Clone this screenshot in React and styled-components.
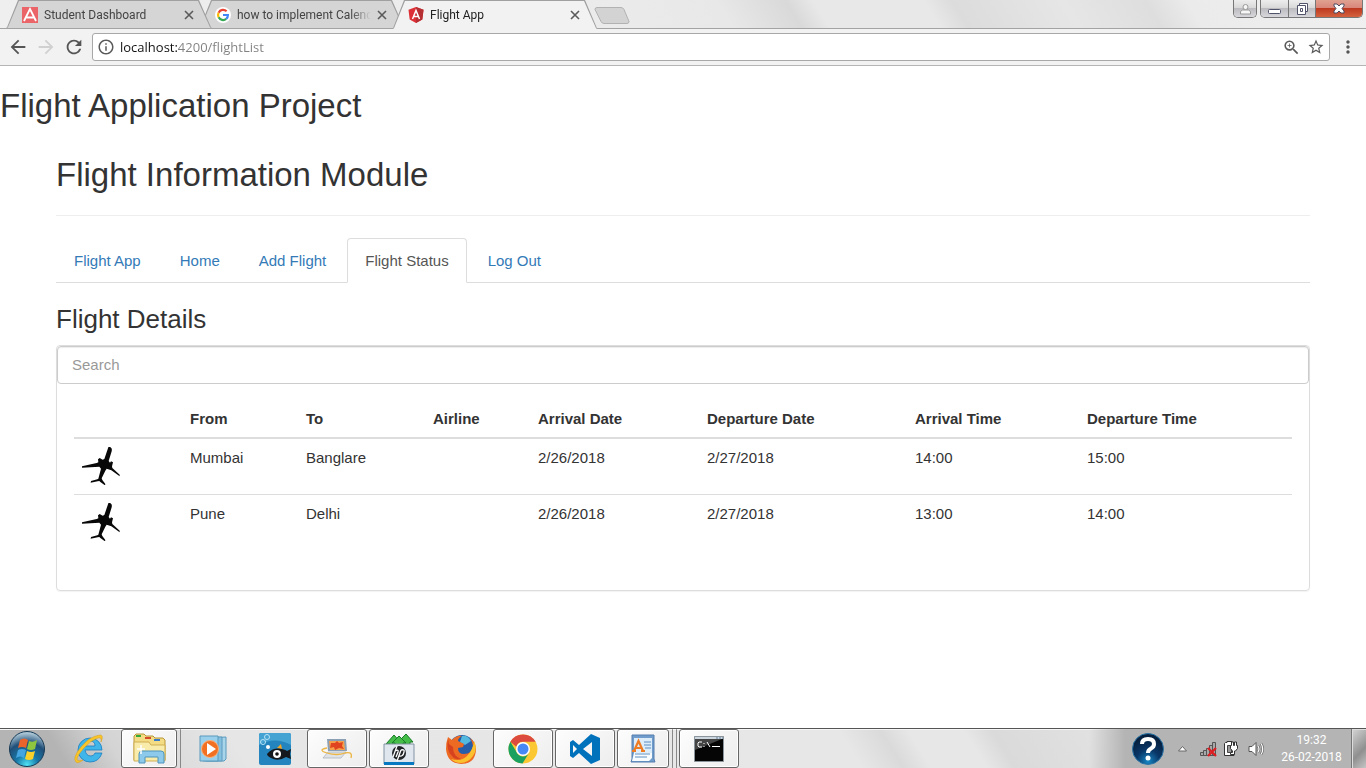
import React from "react";
import styled, { createGlobalStyle, css } from "styled-components";
import {
  MdArrowBack,
  MdArrowForward,
  MdRefresh,
  MdInfoOutline,
  MdZoomIn,
  MdStarBorder,
  MdMoreVert,
} from "react-icons/md";

const GlobalStyle = createGlobalStyle`
  * { box-sizing: border-box; }
  body {
    margin: 0;
    background: #fff;
    color: #333;
    font-family: "Liberation Sans", Arial, sans-serif;
    font-size: 15px;
    line-height: 22px;
  }
  button { padding: 0; border: 0; background: none; font: inherit; color: inherit; }
  svg { display: block; flex: none; }
`;

const uiFont = css`
  font-family: Roboto, "Segoe UI", sans-serif;
`;

const Screen = styled.div`
  display: flex;
  flex-direction: column;
  min-height: 100vh;
`;

/* Browser window */

const TabStrip = styled.header`
  ${uiFont}
  display: flex;
  align-items: flex-start;
  height: 29px;
  padding: 0 3px 0 6px;
  border-bottom: 1px solid #a3a3a3;
  background: linear-gradient(
    58deg,
    #efefef 0%, #ebebeb 44%, #e8e8e8 53%, #d9d9d9 58%, #e8e8e8 60%, #e8e8e8 68%,
    #dcdcdc 70%, #e6e6e6 78%, #dedede 84%, #ebebeb 87%, #f0f0f0 100%
  );
`;

const Tabs = styled.nav`
  display: flex;
  flex: 1;
  min-width: 0;
`;

const tabShape = "polygon(0 100%, 1px 97%, 12px 0, calc(100% - 13px) 0, calc(100% - 1px) 97%, 100% 100%)";

const Tab = styled.div`
  position: relative;
  z-index: ${(p) => p.$level};
  display: flex;
  align-items: center;
  gap: 6px;
  width: 206px;
  height: ${(p) => (p.$active ? 29 : 28)}px;
  padding: 1px 18px 0 16px;
  margin-right: -13px;
  color: #333;
  font-size: 12px;
  isolation: isolate;

  &::before, &::after {
    content: "";
    position: absolute;
    z-index: -1;
    inset: 0;
    background: #a0a0a0;
    clip-path: ${tabShape};
  }
  &::after {
    inset: 1px 1px 0;
    background: ${(p) => (p.$active ? "#f2f2f2" : "#d5d5d5")};
  }
`;

const TabTitle = styled.span`
  flex: 1;
  overflow: hidden;
  white-space: nowrap;
  color: ${(p) => (p.$active ? "#222" : "#444")};
  mask-image: linear-gradient(90deg, #000 calc(100% - 20px), transparent);
`;

const TabClose = styled.button`
  display: grid;
  place-items: center;
  width: 10px;
  height: 16px;
`;

const NewTab = styled.button`
  width: 34px;
  height: 17px;
  margin: 7px 0 0 10px;
  svg { overflow: visible; }
`;

const WindowControls = styled.div`
  display: flex;
  gap: 3px;
`;

const ControlGroup = styled.div`
  display: flex;
  height: 18px;
  border: 1px solid #777;
  border-top: 0;
  border-radius: 0 0 5px 5px;
  overflow: hidden;
`;

const ControlButton = styled.button`
  display: grid;
  place-items: center;
  width: ${(p) => p.$width}px;
  border-right: 1px solid #777;
  background: ${(p) =>
    p.$close
      ? "linear-gradient(#e0a191 0, #d8877a 45%, #bd3a20 50%, #d4623f 100%)"
      : "linear-gradient(#ededed 0, #d9d9d9 45%, #bcbcc0 50%, #d8d8dc 100%)"};
  &:last-child { border-right: 0; }
`;

const Toolbar = styled.form`
  display: flex;
  align-items: center;
  height: 37px;
  padding: 0 8px 0 4px;
  border-bottom: 1px solid #b5b5b5;
  background: #f2f2f2;
`;

const ToolButton = styled.button`
  display: grid;
  place-items: center;
  width: 28px;
  height: 28px;
  color: ${(p) => (p.disabled ? "#d0d0d0" : "#555")};
`;

const Omnibox = styled.div`
  display: flex;
  align-items: center;
  flex: 1;
  height: 28px;
  margin: 0 8px 0 4px;
  padding: 0 3px 0 4px;
  gap: 5px;
  border: 1px solid #a8a8a8;
  border-radius: 3px;
  background: #fff;
  color: #5a5a5a;
`;

const Address = styled.input`
  font-family: "Open Sans", "Segoe UI", sans-serif;
  flex: 1;
  min-width: 0;
  height: 24px;
  padding: 0;
  border: 0;
  outline: 0;
  font-size: 13px;
  color: transparent;
  background: linear-gradient(90deg, #111 57px, #808080 57px);
  background-clip: text;
  caret-color: #111;
`;

const OmniButton = styled.button`
  display: grid;
  place-items: center;
  width: 20px;
  height: 20px;
`;

const MenuButton = styled.button`
  display: grid;
  place-items: center;
  width: 20px;
  height: 28px;
  color: #555;
`;

/* Flight application */

const Page = styled.main`
  flex: 1;
  padding: 22px 0;
`;

const Heading = styled.h1`
  margin: 0;
  font-size: 33px;
  font-weight: 400;
  line-height: 36px;
`;

const Container = styled.section`
  margin: 33px 56px 0;
`;

const Divider = styled.hr`
  margin: 22px 0;
  border: 0;
  border-top: 1px solid #eee;
`;

const NavTabs = styled.nav`
  display: flex;
  gap: 3px;
  border-bottom: 1px solid #ddd;
`;

const NavLink = styled.a`
  padding: 11px 17px 10px;
  margin-bottom: -1px;
  border: 1px solid transparent;
  border-radius: 4px 4px 0 0;
  color: #337ab7;
  text-decoration: none;
  ${(p) =>
    p.$active &&
    css`
      border-color: #ddd #ddd #fff;
      background: #fff;
      color: #555;
    `}
`;

const SubHeading = styled.h2`
  margin: 22px 0 11px;
  font-size: 26px;
  font-weight: 400;
  line-height: 29px;
`;

const Panel = styled.div`
  border: 1px solid #ddd;
  border-radius: 4px;
  box-shadow: 0 1px 1px rgba(0, 0, 0, 0.05);
`;

const Search = styled.input`
  display: block;
  width: 100%;
  height: 38px;
  padding: 0 14px 2px;
  border: 1px solid #ccc;
  border-radius: 4px;
  outline: 0;
  box-shadow: inset 0 1px 1px rgba(0, 0, 0, 0.075);
  font: inherit;
  &::placeholder { color: #999; }
`;

const PanelBody = styled.div`
  padding: 16px 17px 18px;
`;

const Table = styled.table`
  width: 100%;
  margin-bottom: 22px;
  border-collapse: collapse;
  table-layout: fixed;
`;

const Col = styled.col`
  width: ${(p) => p.$width}px;
`;

const Th = styled.th`
  padding: 8px 8px 7px;
  border-bottom: 2px solid #ddd;
  text-align: left;
`;

const Td = styled.td`
  height: 56px;
  padding: 8px;
  border-top: 1px solid #ddd;
  vertical-align: top;
`;

/* Desktop taskbar */

const Taskbar = styled.footer`
  ${uiFont}
  display: flex;
  height: 40px;
  border-top: 1px solid #555;
  box-shadow: inset 0 1px #f6f6f6;
  background: linear-gradient(
    58deg,
    #b4b4b4 0, #b4b4b4 5%, #d4d4d4 9%, #e6e6e6 18%, #e7e7e7 62%, #dadada 65%,
    #e7e7e7 67%, #e7e7e7 71%, #dadada 73%, #e3e3e3 82%, #e3e3e3 100%
  );
`;

const StartButton = styled.button`
  display: grid;
  place-items: center;
  width: 54px;
`;

const Apps = styled.div`
  display: flex;
  flex: 1;
  gap: 2px;
  padding-left: 5px;
`;

const Slot = styled.div`
  display: flex;
  gap: 3px;
  width: 60px;
`;

const AppButton = styled.button`
  display: grid;
  place-items: center;
  flex: 1;
  border: 1px solid transparent;
  border-radius: 3px;
  ${(p) =>
    p.$open &&
    css`
      border-color: #666;
      background: linear-gradient(135deg, #fdfdfd, #ededed);
      box-shadow: inset 0 0 0 1px #fff;
    `}
`;

const StackEdge = styled.span`
  width: 1px;
  border-radius: 2px;
  background: #888;
`;

const Tray = styled.div`
  display: flex;
  align-items: center;
  padding-left: 40px;
  color: #fff;
  background: linear-gradient(90deg, #e3e3e300 0, #b4b4b4 36px);
`;

const TrayButton = styled.button`
  display: grid;
  place-items: center;
  width: ${(p) => p.$width}px;
  height: 38px;
`;

const Clock = styled.time`
  width: 83px;
  padding-left: 4px;
  font-size: 12px;
  line-height: 17px;
  text-align: center;
  white-space: nowrap;
`;

const ShowDesktop = styled.button`
  align-self: stretch;
  width: 15px;
  border-left: 1px solid #777;
  background: linear-gradient(135deg, #d5d5d5, #8f8f8f 60%, #c5c5c5);
  box-shadow: inset 1px 1px #ddd;
`;

/* Drawings */

const CloseMark = () => (
  <svg width="10" height="10" viewBox="0 0 10 10" stroke="#5a5a5a" strokeWidth="1.600">
    <path d="M1 1l8 8M9 1L1 9" />
  </svg>
);

const AngularOld = () => (
  <svg width="16" height="16" viewBox="0 0 16 16">
    <path fill="#ea6468" d="M0 0h16v16H0z" />
    <path d="M2 14L8 2l6 12M4.500 10.500h7" fill="none" stroke="#fff" strokeWidth="1.800" />
  </svg>
);

const GoogleMark = () => (
  <svg width="16" height="16" viewBox="0 0 16 16">
    <circle cx="8" cy="8" r="8" fill="#fff" />
    <g fill="none" strokeWidth="2.200">
      <path d="M11.600 4.300A5 5 0 0 0 3.600 5.700" stroke="#ea4335" />
      <path d="M3.600 5.700a5 5 0 0 0 0 4.600" stroke="#fbbc05" />
      <path d="M3.600 10.300a5 5 0 0 0 7.600 1.600" stroke="#34a853" />
      <path d="M8 8h4.900a5 5 0 0 1-1.700 3.900" stroke="#4285f4" />
    </g>
  </svg>
);

const AngularShield = () => (
  <svg width="16" height="16" viewBox="0 0 16 16">
    <path fill="#dd3036" d="M8 0l7.500 2.700-1.200 9.800L8 16l-6.300-3.500L.500 2.700z" />
    <path fill="#b52e31" d="M8 0l7.500 2.700-1.200 9.800L8 16z" />
    <path fill="none" stroke="#fff" strokeWidth="1.500" d="M4.500 12L8 3.500l3.500 8.500M6 9.500h4" />
  </svg>
);

const Plane = () => (
  <svg width="38" height="38" viewBox="0 0 114 114" role="img" aria-label="Flight">
    <path
      fill="#080808"
      d="M86 2q5 1 3 11L80 42l4 5 3-4 6 3-3 12 1 5 22 20v5L88 70 74 65l-4 6-11 23 2 5 9 12-1 4-14-10-3-3-5 1-21 4 1-5 19-5 3-2 8-30-5-6-52 3v-4l44-10 5-2-1-9 5-4 9 5 5-2 12-35q3-9 6-9z"
    />
  </svg>
);

const StartOrb = () => (
  <svg width="38" height="38" viewBox="0 0 38 38">
    <defs>
      <radialGradient id="orb" cx="50%" cy="95%" r="90%">
        <stop offset="0" stopColor="#4fe3f5" />
        <stop offset=".35" stopColor="#1878a8" />
        <stop offset=".7" stopColor="#204f78" />
        <stop offset="1" stopColor="#a9c4d4" />
      </radialGradient>
    </defs>
    <circle cx="19" cy="19" r="17.500" fill="url(#orb)" stroke="#173a55" />
    <path fill="#e9632b" d="M12 10q4-3 8 0l-2 8q-4-2-8 0z" />
    <path fill="#8fc63f" d="M21 11q4 2 8-1l-2 9q-4 2-8 0z" />
    <path fill="#45a5e0" d="M10 20q4-2 8 0l-2 8q-4-3-8 0z" />
    <path fill="#fcd12a" d="M19 21q4 2 8 0l-2 8q-4 2-8 0z" />
  </svg>
);

const ExplorerE = () => (
  <svg width="32" height="32" viewBox="0 0 32 32">
    <path
      d="M29 20q-3 9-12 9A12 12 0 1 1 29 17H12q1 6 6 6 3 0 4-3zM12 13h10q0-5-5-5t-5 5z"
      fill="#3fb5ea" stroke="#1b7fc0" strokeWidth=".8" fillRule="evenodd"
    />
    <path d="M3 29Q-1 25 8 14T27 2q4 0 1 7 1-5-3-4-7 2-14 10T4 26q0 3 6 1-5 4-7 2z" fill="#f8c52a" stroke="#d99a13" strokeWidth=".5" />
  </svg>
);

const Folders = () => (
  <svg width="34" height="32" viewBox="0 0 34 32">
    <path fill="#f3dc84" stroke="#b89638" d="M2 27V3l2-2h8l2 2h7l2 2h8l2 2v20z" />
    <path fill="#35a83a" d="M4 2h5v2H4z" />
    <path fill="#d64a2c" d="M13 4h6v2h-6z" />
    <path fill="#3b7cc9" d="M22 6h6v2h-6z" />
    <path fill="#f9ebaa" stroke="#d0af52" d="M2 9h15l2 3h14v16H2z" />
    <path fill="#8cc9ea" stroke="#4e94bd" d="M7 30V21q0-3 3-3h19q3 0 3 3v9h-6v-6H13v6z" />
    <path stroke="#fff" strokeWidth="1.500" d="M9 12v9M5 16h8" />
  </svg>
);

const MediaPlayer = () => (
  <svg width="28" height="28" viewBox="0 0 28 28">
    <path fill="#a9d5ea" stroke="#5b9abd" d="M7 3l20-1v22l-2 2H7z" />
    <path fill="#86c0df" stroke="#5b9abd" d="M4 2h19v24H4z" />
    <path fill="#9bd0ec" stroke="#5b9abd" d="M1 1h18v25H1z" />
    <circle cx="11" cy="14" r="8.500" fill="#f27022" stroke="#fbb27c" />
    <path fill="#fff" d="M8 8l9 6-9 6z" />
  </svg>
);

const FishApp = () => (
  <svg width="32" height="32" viewBox="0 0 32 32">
    <rect width="32" height="32" rx="2" fill="#2484bd" />
    <path fill="#44a3d2" d="M0 12q16-9 32 0V2q0-2-2-2H2Q0 0 0 2z" />
    <path fill="#f6a623" d="M18 15l4-4 1 5z" />
    <path fill="#15191d" d="M8 21q6-7 15-5 4 1 5 2l4-2-1 5 1 5-5-2q-8 5-15 1-4-2-4-4z" />
    <circle cx="18" cy="21" r="4" fill="#fff" />
    <circle cx="18" cy="21" r="1.800" fill="#111" />
    <g fill="none" stroke="#b9e5f8"><circle cx="8" cy="4" r="2.500" /><circle cx="4" cy="9" r="2.500" /></g>
    <circle cx="9" cy="14" r="2" fill="#fff" />
  </svg>
);

const Laptop = () => (
  <svg width="32" height="24" viewBox="0 0 32 24">
    <path fill="#8ba0b5" d="M6 2h19l1 12H7z" />
    <path fill="#f5a04b" d="M8 4h15l1 9H9z" />
    <path fill="#e0451f" d="M10 6l4 0 2-2 2 2 4-1-1 4 2 3-5-1-4 2-1-3-4 1z" />
    <path fill="#dfe3e7" stroke="#a5adb6" strokeWidth=".7" d="M7 15h18l-5 6H2z" />
    <path fill="none" stroke="#ecb644" strokeWidth="1.300" d="M6 11Q-4 13 6 16q10 3 18 0 8-2 6 5" />
  </svg>
);

const HpUpdate = () => (
  <svg width="32" height="34" viewBox="0 0 32 34">
    <g fill="#45bd49" stroke="#177a27">
      <path d="M3 12l8-9 7 8h-3v5H7v-4z" />
      <path d="M15 10l8-8 7 8h-3v5h-8v-5z" />
      <path d="M9 11l7-7 7 7h-3v5h-8v-5z" />
    </g>
    <path fill="#dfe6ed" stroke="#8293a3" d="M1 12h30v20H1z" />
    <path fill="#0878c0" d="M1 30h30v3H1z" />
    <circle cx="16" cy="21" r="7" fill="#202427" />
    <g fill="none" stroke="#fff" strokeWidth="1.300">
      <path d="M14 14l-4 11M12 19q4-2 3 1l-2 5M18 18l-4 11M18 18q4-1 3 2-1 5-5 4" />
    </g>
  </svg>
);

const Firefox = () => (
  <svg width="32" height="32" viewBox="0 0 32 32">
    <circle cx="17" cy="15" r="13" fill="#255da8" />
    <path fill="#54b9df" d="M17 3q6-1 9 5l-6 4-5-3z" />
    <path fill="#ed6a22" d="M3 4l4 3q5-5 10-4-4 2-4 5l6 3-1 3-5 1q0 6 6 6 8 0 9-8-1-5-3-8 6 4 6 12-1 14-15 14Q2 30 1 16 1 9 3 4z" />
    <path fill="#fbc02d" d="M29 8q4 8-1 15-5 7-12 7-6 0-10-4 10 3 16-3 6-6 7-15z" />
    <path fill="#d8431f" d="M3 6q-2 12 4 17 3 4 9 3-8-3-8-12L4 11z" />
  </svg>
);

const ChromeMark = () => (
  <svg width="30" height="30" viewBox="0 0 30 30">
    <circle cx="15" cy="15" r="14.500" fill="#fbc834" />
    <path fill="#dc4b3e" d="M2.400 7.700A14.500 14.500 0 0 1 27.600 7.700H15a7 7 0 0 0-6.700 5z" />
    <path fill="#1aa15f" d="M2.400 7.700A14.500 14.500 0 0 0 14.500 29.500L21 19a7 7 0 0 1-12.500-1z" />
    <circle cx="15" cy="15" r="7" fill="#fff" />
    <circle cx="15" cy="15" r="5.500" fill="#4688f4" />
  </svg>
);

const VsCode = () => (
  <svg width="30" height="30" viewBox="0 0 30 30">
    <path
      fill="#0072bc" fillRule="evenodd"
      d="M21 0l9 4v22l-9 4L9 19l-6 5-3-2V8l3-2 6 5zM22 8l-9 7 9 7zM3 11v8l4-4z"
    />
  </svg>
);

const WordPad = () => (
  <svg width="26" height="30" viewBox="0 0 26 30">
    <path fill="#6f9ccc" stroke="#547fae" d="M2 1h22v24l1 3H1l1-3z" />
    <path fill="#dcecf9" d="M4 4h18v16H4z" />
    <path fill="#f8fbfe" d="M4 19h18v5l-3 3H2z" />
    <path fill="none" stroke="#ed7c24" strokeWidth="2.200" d="M4 17L8.500 7 13 17M6 14h5M2 17h4M11 17h4" />
    <path stroke="#5d8fc0" d="M14 8h7M14 11h7M15 14h6M5 20h15M5 23h12" />
  </svg>
);

const Console = () => (
  <svg width="30" height="26" viewBox="0 0 30 26">
    <path fill="#050505" stroke="#8b949b" d="M.500 .500h29v25H.500z" />
    <path fill="#ccd7df" d="M1 1h28v2H1z" />
    <path fill="#444" d="M1 3h27L1 14z" />
    <path stroke="#5d7d98" strokeDasharray="2 1" d="M22 2h7" />
    <path fill="none" stroke="#fff" d="M8 6H5L4 7v3l1 1h3M10 7v1M10 10v1M13 6l3 5M18 10.500h8" />
  </svg>
);

const HelpOrb = () => (
  <svg width="32" height="32" viewBox="0 0 32 32">
    <defs>
      <radialGradient id="help" cx="50%" cy="90%" r="75%">
        <stop offset="0" stopColor="#1787c5" />
        <stop offset=".5" stopColor="#0a3768" />
        <stop offset="1" stopColor="#06203f" />
      </radialGradient>
    </defs>
    <circle cx="16" cy="16" r="15.500" fill="url(#help)" stroke="#2c76a8" />
    <path d="M10 11q0-5 6-5t6 5q0 3-3 4.500t-3 4.500" fill="none" stroke="#fff" strokeWidth="4" />
    <circle cx="16" cy="25" r="2.500" fill="#fff" />
  </svg>
);

const Network = () => (
  <svg width="17" height="16" viewBox="0 0 17 16">
    <path
      fill="#a8a8a8" stroke="#555"
      d="M.500 11.500h3v3h-3zM3.500 9.500h3v5h-3zM6.500 7.500h3v7h-3zM9.500 4.500h3v10h-3zM12.500 1.500h3v13h-3z"
    />
    <path stroke="#df1c20" strokeWidth="2.200" d="M8 7l8 8M16 7l-8 8" />
  </svg>
);

const Power = () => (
  <svg width="16" height="17" viewBox="0 0 16 17">
    <path fill="#fff" stroke="#333" d="M1.500 3.500l1-1H4v-1h5v1h2v13H1.500z" />
    <path fill="#999" stroke="#444" d="M4.500 5.500h4v7h-4z" />
    <path fill="#fff" stroke="#333" d="M7.500 5.500h1V2h2v3.500h1V2h2v3.500h1v3l-2 2.500h-1v3.500H7.500v-2h2V11L7.500 8.500z" />
  </svg>
);

const Speaker = () => (
  <svg width="17" height="16" viewBox="0 0 17 16">
    <path fill="#fff" stroke="#555" d="M1 5.500h3l4-4v13l-4-4H1z" />
    <path fill="none" stroke="#666" strokeWidth="2.500" d="M10 5q2 3 0 6M13 2.500q3.500 5.500 0 11" />
    <path fill="none" stroke="#fff" strokeWidth="1.200" d="M10 5q2 3 0 6M13 2.500q3.500 5.500 0 11" />
  </svg>
);

const browserTabs = [
  { title: "Student Dashboard", Icon: AngularOld },
  { title: "how to implement Calend", Icon: GoogleMark },
  { title: "Flight App", Icon: AngularShield, active: true },
];

const links = ["Flight App", "Home", "Add Flight", "Flight Status", "Log Out"];

const columns = [
  { label: "", width: 108 },
  { label: "From", width: 116 },
  { label: "To", width: 127 },
  { label: "Airline", width: 105 },
  { label: "Arrival Date", width: 169 },
  { label: "Departure Date", width: 208 },
  { label: "Arrival Time", width: 172 },
  { label: "Departure Time", width: 213 },
];

const flights = [
  ["Mumbai", "Banglare", "", "2/26/2018", "2/27/2018", "14:00", "15:00"],
  ["Pune", "Delhi", "", "2/26/2018", "2/27/2018", "13:00", "14:00"],
];

const apps = [
  { name: "Internet Explorer", Icon: ExplorerE },
  { name: "Windows Explorer", Icon: Folders, open: true, stack: 1 },
  { name: "Media Player", Icon: MediaPlayer },
  { name: "Fish", Icon: FishApp },
  { name: "Photo viewer", Icon: Laptop, open: true },
  { name: "HP Update", Icon: HpUpdate, open: true },
  { name: "Firefox", Icon: Firefox },
  { name: "Chrome", Icon: ChromeMark, open: true },
  { name: "Visual Studio Code", Icon: VsCode, open: true },
  { name: "WordPad", Icon: WordPad, open: true, stack: 2 },
  { name: "Command Prompt", Icon: Console, open: true },
];

const BrowserChrome = () => (
  <>
    <TabStrip>
      <Tabs aria-label="Browser tabs">
        {browserTabs.map(({ title, Icon, active }, i) => (
          <Tab key={title} $active={active} $level={active ? 5 : 3 - i}>
            <Icon />
            <TabTitle $active={active}>{title}</TabTitle>
            <TabClose type="button" aria-label={`Close ${title}`}><CloseMark /></TabClose>
          </Tab>
        ))}
        <NewTab type="button" aria-label="New tab">
          <svg width="34" height="17" viewBox="0 0 34 17">
            <path d="M2 .500h24q2 0 3 2l5 12q0 2-2 2H9q-2 0-3-2L0 2.500Q0 .500 2 .500z" fill="#d3d3d3" stroke="#b2b2b2" />
          </svg>
        </NewTab>
      </Tabs>
      <WindowControls>
        <ControlGroup>
          <ControlButton type="button" aria-label="Profile" $width={22}>
            <svg width="11" height="12" viewBox="0 0 11 12" fill="#f7f7f7" stroke="#999">
              <path d="M.500 11V8.500l2-1.500h6l2 1.500V11z" />
              <circle cx="5.500" cy="4" r="2.500" />
            </svg>
          </ControlButton>
        </ControlGroup>
        <ControlGroup>
          <ControlButton type="button" aria-label="Minimize" $width={28}>
            <svg width="13" height="11" viewBox="0 0 13 11">
              <rect x=".500" y="6.500" width="12" height="4" rx="1" fill="#fff" stroke="#50536a" />
            </svg>
          </ControlButton>
          <ControlButton type="button" aria-label="Restore" $width={27}>
            <svg width="13" height="13" viewBox="0 0 13 13" fill="#fff" stroke="#50536a">
              <path d="M3.500 1.500h8v8h-8z" />
              <path d="M1.500 3.500h8v9h-8zM4.500 6.500h2v3h-2z" />
            </svg>
          </ControlButton>
          <ControlButton type="button" aria-label="Close" $width={46} $close>
            <svg width="12" height="11" viewBox="0 0 12 11" fill="#fff" stroke="#4d4b60">
              <path d="M1 1h3l2 2 2-2h3v2L9 5.500 11 8v2H8L6 8l-2 2H1V8l2-2.500L1 3z" />
            </svg>
          </ControlButton>
        </ControlGroup>
      </WindowControls>
    </TabStrip>
    <Toolbar onSubmit={(e) => e.preventDefault()}>
      <ToolButton type="button" aria-label="Back"><MdArrowBack size={22} /></ToolButton>
      <ToolButton type="button" aria-label="Forward" disabled><MdArrowForward size={22} /></ToolButton>
      <ToolButton type="button" aria-label="Reload"><MdRefresh size={22} /></ToolButton>
      <Omnibox>
        <MdInfoOutline size={18} />
        <Address aria-label="Address" defaultValue="localhost:4200/flightList" spellCheck={false} />
        <OmniButton type="button" aria-label="Zoom"><MdZoomIn size={19} /></OmniButton>
        <OmniButton type="button" aria-label="Bookmark"><MdStarBorder size={18} /></OmniButton>
      </Omnibox>
      <MenuButton type="button" aria-label="Menu"><MdMoreVert size={20} /></MenuButton>
    </Toolbar>
  </>
);

const FlightTable = () => (
  <Table>
    <colgroup>
      {columns.map((c) => <Col key={c.label} $width={c.width} />)}
    </colgroup>
    <thead>
      <tr>{columns.map((c) => <Th key={c.label} scope="col">{c.label}</Th>)}</tr>
    </thead>
    <tbody>
      {flights.map((flight) => (
        <tr key={flight[0]}>
          <Td><Plane /></Td>
          {flight.map((value, i) => <Td key={i}>{value}</Td>)}
        </tr>
      ))}
    </tbody>
  </Table>
);

export default function App() {
  return (
    <Screen>
      <GlobalStyle />
      <BrowserChrome />
      <Page>
        <Heading>Flight Application Project</Heading>
        <Container>
          <Heading as="h2">Flight Information Module</Heading>
          <Divider />
          <NavTabs aria-label="Flight">
            {links.map((label) => (
              <NavLink key={label} href="#" $active={label === "Flight Status"}>{label}</NavLink>
            ))}
          </NavTabs>
          <SubHeading as="h3">Flight Details</SubHeading>
          <Panel>
            <Search type="text" placeholder="Search" aria-label="Search" />
            <PanelBody><FlightTable /></PanelBody>
          </Panel>
        </Container>
      </Page>
      <Taskbar>
        <StartButton type="button" aria-label="Start"><StartOrb /></StartButton>
        <Apps>
          {apps.map(({ name, Icon, open, stack = 0 }) => (
            <Slot key={name}>
              <AppButton type="button" aria-label={name} $open={open}><Icon /></AppButton>
              {Array.from({ length: stack }, (_, i) => <StackEdge key={i} />)}
            </Slot>
          ))}
        </Apps>
        <Tray>
          <TrayButton type="button" aria-label="Help" $width={38}><HelpOrb /></TrayButton>
          <TrayButton type="button" aria-label="Show hidden icons" $width={31}>
            <svg width="9" height="6" viewBox="0 0 9 6"><path d="M4.500 .500l4 4.500h-8z" fill="#fff" stroke="#666" /></svg>
          </TrayButton>
          <TrayButton type="button" aria-label="Network" $width={20}><Network /></TrayButton>
          <TrayButton type="button" aria-label="Power" $width={26}><Power /></TrayButton>
          <TrayButton type="button" aria-label="Volume" $width={24}><Speaker /></TrayButton>
          <Clock>19:32<br />26-02-2018</Clock>
          <ShowDesktop type="button" aria-label="Show desktop" />
        </Tray>
      </Taskbar>
    </Screen>
  );
}
